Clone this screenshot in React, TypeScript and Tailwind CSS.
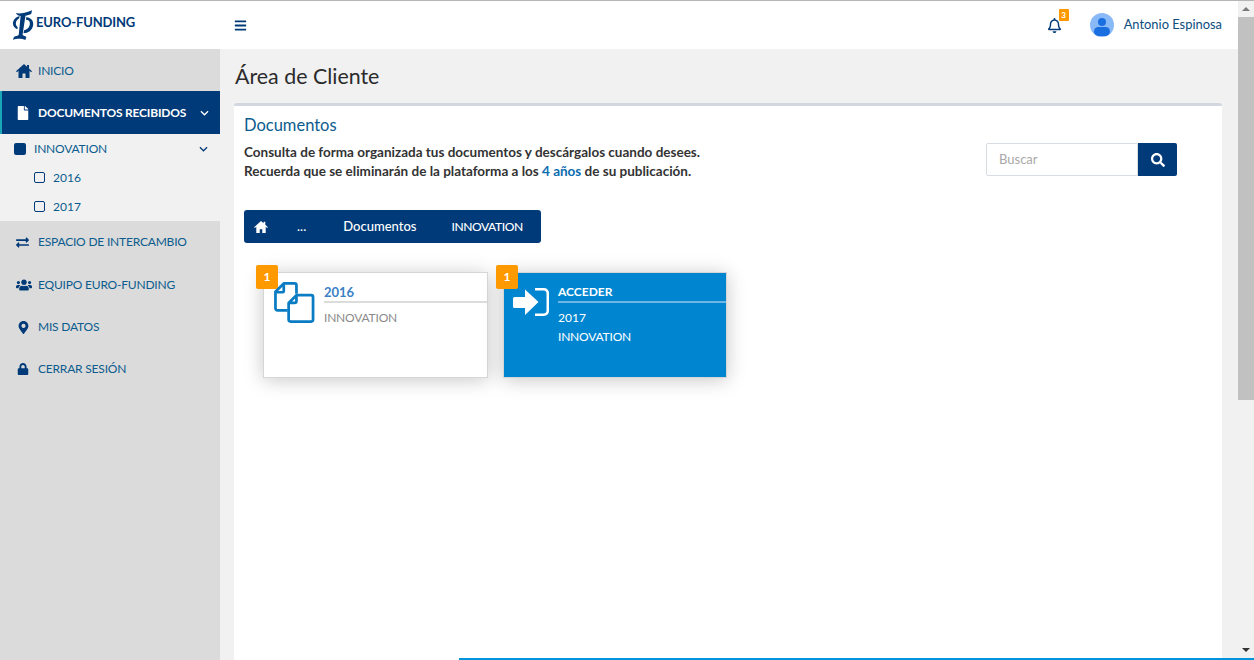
import React from "react";
import { FaFile, FaExchangeAlt, FaUsers, FaMapMarkerAlt, FaLock, FaBars, FaSearch, FaRegBell } from "react-icons/fa";

const font = "font-['Lato','Noto_Sans',sans-serif]";

function Chevron({ className }: { className: string }) {
  return (
    <svg viewBox="0 0 10 6" className={className} fill="none" stroke="currentColor" strokeWidth="1.4">
      <path d="M1 1l4 4 4-4" />
    </svg>
  );
}

function Home({ className }: { className: string }) {
  return (
    <svg viewBox="0 0 16 14" className={className} fill="currentColor">
      <path d="M8 0L0 7.200l.9 1L2.500 6.800V14h4V9.500h3V14h4V6.800l1.600 1.400.9-1L13 4.500V1h-2v1.700z" />
    </svg>
  );
}

function NavItem({ icon, label }: { icon: React.ReactNode; label: string }) {
  return (
    <div className="flex h-[42.3px] items-center pl-4 text-[12px] tracking-[-0.2px] text-[#0b5c8e]">
      <span className="flex w-[22px] items-center text-[#003a78]">{icon}</span>
      <span>{label}</span>
    </div>
  );
}

export default function App() {
  return (
    <div className={`${font} relative flex h-[660px] w-[1254px] overflow-hidden bg-white`}>
      <div className="flex h-full w-[1238px] flex-col border-t border-[#b5b5b5]">
        <header className="flex h-12 shrink-0 items-center bg-white">
          <div className="flex w-[234px] items-center pl-3">
            <svg viewBox="0 0 24 32" className="h-[31px] w-[23px] text-[#003a78]" fill="currentColor">
              <path d="M4 3c4 1 9 0 17-3l-1 4c-3 1-5 2-7 2l-4 0C7 6 5 5 4 3z" />
              <path d="M9 6h5l-3 20c2 1 4 2 4 2l-1 3c-3-1-8-2-13 0l1-3c2-1 4-1 5-2z" />
              <path d="M15 7c5 1 8 4 7 9-1 5-5 8-10 8l.6-3c3-1 5-2 6-6 .5-3-1-5-4-5z" />
              <path d="M1 14c0-4 3-7 7-8l-.5 2.500C5 10 4 12 4 14c0 2 1 3 2 4l-.5 2C3 19 1 17 1 14z" />
            </svg>
            <span className="ml-px mb-[5px] text-[13px] font-bold tracking-[-0.15px] text-[#003a78]">EURO-FUNDING</span>
          </div>
          <FaBars className="text-[13px] text-[#003a78]" />
          <div className="ml-auto flex items-center pr-4">
            <div className="relative mr-[28px]">
              <FaRegBell className="text-[15px] text-[#003a78]" />
              <span className="absolute left-[12px] top-[-9px] flex h-3 w-[10px] items-center justify-center rounded-[1px] bg-[#ff9900] text-[8px] font-bold text-white">
                3
              </span>
            </div>
            <div className="relative flex h-6 w-6 items-center justify-center overflow-hidden rounded-full bg-[#8ab9f8]">
              <span className="absolute top-[5px] h-2 w-2 rounded-full bg-[#1a6fe0]" />
              <span className="absolute top-[14px] h-[9px] w-[16px] rounded-full bg-[#1a6fe0]" />
            </div>
            <span className="ml-[10px] text-[12.900px] text-[#0b4d7e]">Antonio Espinosa</span>
          </div>
        </header>
        <div className="flex min-h-0 flex-1">
          <aside className="w-[220px] shrink-0 bg-[#dbdbdb]">
            <div className="h-[42.3px] pt-[1px]">
              <NavItem icon={<Home className="h-[14px] w-4" />} label="INICIO" />
            </div>
            <div className="flex h-[43px] items-center border-l-2 border-[#1aa6b7] bg-[#003a78] pl-[14px] pr-[11px] text-[12px] font-bold tracking-[-0.2px] whitespace-nowrap text-white">
              <span className="flex w-[22px] items-center"><FaFile className="text-[14px]" /></span>
              <span>DOCUMENTOS RECIBIDOS</span>
              <Chevron className="ml-auto h-[6px] w-[9px]" />
            </div>
            <div className="h-[87px] bg-[#f1f1f1] text-[12px] text-[#0b5c8e]">
              <div className="flex h-[29px] items-center pl-[14px] pr-[12px] tracking-[-0.2px]">
                <span className="h-3 w-3 rounded-[2px] bg-[#003a78]" />
                <span className="ml-2">INNOVATION</span>
                <Chevron className="ml-auto h-[6px] w-[9px] text-[#003a78]" />
              </div>
              <div className="flex h-[29px] items-center pl-[34px]">
                <span className="h-[11px] w-[11px] rounded-[2px] border border-[#003a78]" />
                <span className="ml-2">2016</span>
              </div>
              <div className="flex h-[29px] items-center pl-[34px]">
                <span className="h-[11px] w-[11px] rounded-[2px] border border-[#003a78]" />
                <span className="ml-2">2017</span>
              </div>
            </div>
            <NavItem icon={<FaExchangeAlt className="text-[13px]" />} label="ESPACIO DE INTERCAMBIO" />
            <NavItem icon={<FaUsers className="text-[16px]" />} label="EQUIPO EURO-FUNDING" />
            <NavItem icon={<FaMapMarkerAlt className="ml-px text-[13px]" />} label="MIS DATOS" />
            <NavItem icon={<FaLock className="ml-px text-[12px]" />} label="CERRAR SESIÓN" />
          </aside>
          <main className="flex min-w-0 flex-1 flex-col bg-[#f1f1f1] pl-[14px] pr-4">
            <h1 className="ml-px flex h-[54px] shrink-0 items-center text-[21.400px] font-normal text-[#2b2b2b]">Área de Cliente</h1>
            <section className="flex-1 rounded-t-[3px] border-t-[3px] border-[#d2d6de] bg-white px-[10px]">
              <div className="flex">
                <div className="w-[742px]">
                  <h2 className="mt-[9px] text-[16.500px] leading-[20px] font-normal text-[#0b5c8e]">Documentos</h2>
                  <p className="mt-2 text-[13.500px] leading-[19px] font-bold text-[#333333]">
                    Consulta de forma organizada tus documentos y descárgalos cuando desees.
                    <br />
                    Recuerda que se eliminarán de la plataforma a los <span className="text-[#0b6cb0]">4 años</span> de su publicación.
                  </p>
                </div>
                <div className="mt-[37px] flex h-[33px]">
                  <div className="flex w-[152px] items-center rounded-l-[2px] border border-[#d8dce3] pl-3 text-[13px] text-[#a9a9a9]">Buscar</div>
                  <button className="flex w-[39px] items-center justify-center rounded-r-[2px] bg-[#003a78] text-white">
                    <FaSearch className="text-[14px]" />
                  </button>
                </div>
              </div>
              <nav className="mt-[29px] flex h-[33px] w-[297px] items-center rounded-[3px] bg-[#003a78] pl-[10px] text-[13px] font-medium text-white">
                <Home className="h-3 w-[14px]" />
                <span className="ml-[29px]">...</span>
                <span className="ml-[37px]">Documentos</span>
                <span className="ml-[35px] text-[12px] tracking-[-0.4px]">INNOVATION</span>
              </nav>
              <div className="ml-[19px] mt-[29px] flex gap-[15px]">
                <div className="relative h-[106px] w-[225px] border border-[#d6d6d6] bg-white shadow-[0_2px_18px_rgba(0,0,0,0.22)]">
                  <span className="absolute left-[-8px] top-[-8px] flex h-6 w-[22px] items-center justify-center rounded-[2px] bg-[#ff9900] text-[12px] font-bold text-white">1</span>
                  <svg viewBox="0 0 42 42" className="absolute left-[10px] top-[9px] h-[41px] w-[41px]" fill="none" stroke="#0a7cc4" strokeWidth="2.800" strokeLinejoin="round">
                    <path d="M10 1.500h11a2 2 0 0 1 2 2v8.500M14 29H3.500a2 2 0 0 1-2-2V10l8.500-8.500v8a1 1 0 0 1-1 1H1.500" />
                    <path d="M25 13.500h13a2 2 0 0 1 2 2v23a2 2 0 0 1-2 2H17a2 2 0 0 1-2-2V21.500l8-8h2zM23 13.500v6a2 2 0 0 1-2 2h-6" />
                  </svg>
                  <div className="ml-[60px] mt-[11px] h-[19px] border-b-2 border-[#dcdcdc] text-[13px] leading-[16px] font-bold text-[#3b7fc4]">2016</div>
                  <div className="ml-[60px] mt-[5px] text-[12px] leading-[19px] tracking-[-0.2px] text-[#8a8a8a]">INNOVATION</div>
                </div>
                <div className="relative h-[106px] w-[224px] border border-[#d6d6d6] bg-[#0086d1] text-white shadow-[0_2px_18px_rgba(0,0,0,0.22)]">
                  <span className="absolute left-[-8px] top-[-8px] flex h-6 w-[22px] items-center justify-center rounded-[2px] bg-[#ff9900] text-[12px] font-bold text-white">1</span>
                  <svg viewBox="0 0 36 30" className="absolute left-[9px] top-[15px] h-[30px] w-[36px]" fill="white">
                    <path d="M0 10.500a1.500 1.500 0 0 1 1.500-1.500H12V1.500l13.500 12.500L12 27v-7H1.500A1.500 1.500 0 0 1 0 18.500z" />
                    <path d="M22 0h9a5 5 0 0 1 5 5v18a5 5 0 0 1-5 5h-9v-2.500h8.500a3 3 0 0 0 3-3V5.500a3 3 0 0 0-3-3H22z" />
                  </svg>
                  <div className="ml-[54px] mt-[11px] h-[19px] border-b-2 border-[#6db5e3] text-[12px] leading-[16px] font-bold">ACCEDER</div>
                  <div className="ml-[54px] mt-[5px] text-[12px] leading-[19px]">2017</div>
                  <div className="ml-[54px] text-[12px] leading-[19px] tracking-[-0.2px]">INNOVATION</div>
                </div>
              </div>
            </section>
          </main>
        </div>
      </div>
      <div className="flex h-full w-4 flex-col border-t border-[#b5b5b5] bg-[#f1f1f1]">
        <div className="flex h-4 items-center justify-center">
          <span className="h-0 w-0 border-x-[4px] border-b-[4px] border-x-transparent border-b-[#7a7a7a]" />
        </div>
        <div className="h-[383px] bg-[#c1c1c1]" />
        <div className="mt-auto mb-[2px] flex h-4 items-center justify-center">
          <span className="h-0 w-0 border-x-[4px] border-t-[4px] border-x-transparent border-t-[#333333]" />
        </div>
      </div>
      <div className="absolute bottom-0 left-[459px] right-0 h-[2px] bg-[#0095da]" />
    </div>
  );
}
